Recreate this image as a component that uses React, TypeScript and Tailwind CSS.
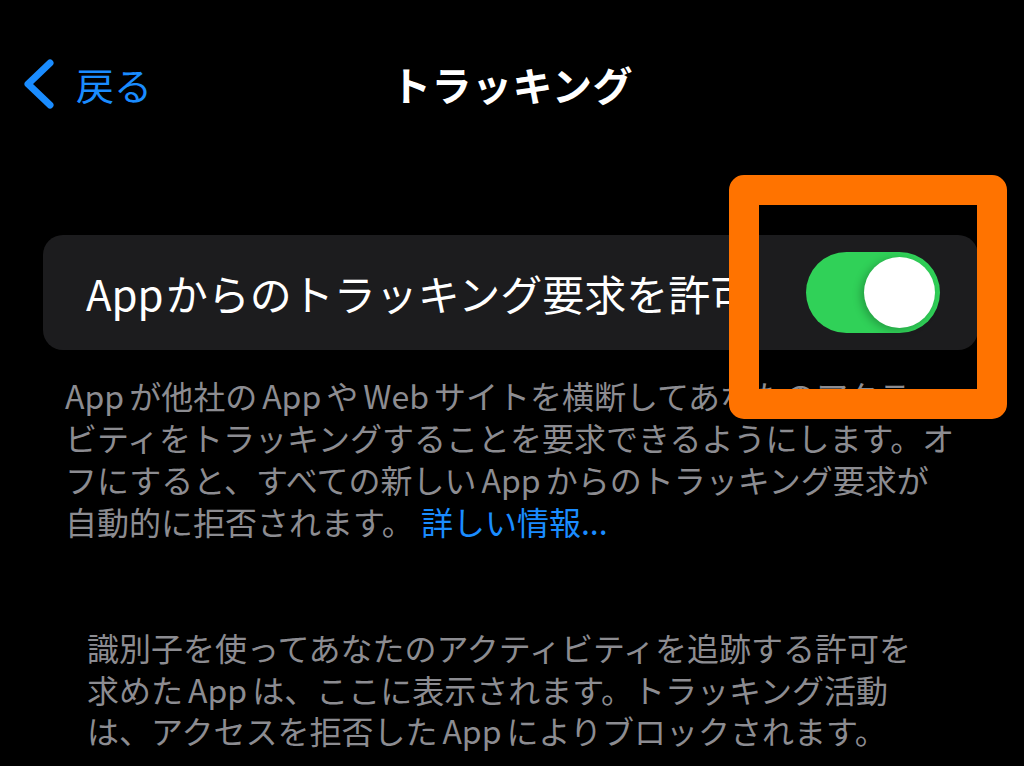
import React from 'react';

const Latin: React.FC<{ children: React.ReactNode; first?: boolean }> = ({ children, first }) => (
  <span className={first ? 'mr-[5px]' : 'mx-[5px]'}>{children}</span>
);

const Toggle: React.FC<{ on: boolean }> = ({ on }) => (
  <div
    className={`flex h-[81px] w-[134px] shrink-0 items-center rounded-full p-[5px] ${
      on ? 'justify-end bg-[#30d158]' : 'justify-start bg-[#39393d]'
    }`}
  >
    <div className="h-[71px] w-[71px] rounded-full bg-white shadow-[-3px_2px_8px_rgba(0,0,0,0.25)]" />
  </div>
);

export default function App() {
  return (
    <div className="relative h-[766px] w-[1024px] overflow-hidden bg-black font-['Noto_Sans_CJK_JP',sans-serif]">
      {/* Nav bar */}
      <div className="mt-[44px] grid h-[80px] grid-cols-[1fr_auto_1fr] items-center pl-[24px] pr-[24px]">
        <div className="flex items-center gap-[22px] text-[#1a8cff]">
          <svg width="30" height="50" viewBox="0 0 30 50" fill="none">
            <polyline
              points="26,4 4,25 26,46"
              stroke="#1a8cff"
              strokeWidth="7"
              strokeLinecap="round"
              strokeLinejoin="round"
            />
          </svg>
          <span className="text-[38px] leading-none">戻る</span>
        </div>
        <div className="text-[40px] font-bold leading-none tracking-[0.5px] text-white">トラッキング</div>
        <div />
      </div>

      {/* Toggle row */}
      <div className="ml-[43px] mt-[111px] flex h-[115px] w-[935px] items-center justify-between rounded-[20px] bg-[#1c1c1e] pl-[43px] pr-[38px]">
        <span className="whitespace-nowrap text-[42px] leading-none text-white">
          <span className="mr-[2px]">App</span>からのトラッキング要求を許可
        </span>
        <Toggle on />
      </div>

      {/* Footer description */}
      <div className="mt-[24px] pl-[65px] text-[32px] leading-[42px] text-[#8c8c91]">
        <div className="whitespace-nowrap">
          <Latin first>App</Latin>が他社の<Latin>App</Latin>や<Latin>Web</Latin>サイトを横断してあなたのアクティ
        </div>
        <div className="whitespace-nowrap">ビティをトラッキングすることを要求できるようにします。オ</div>
        <div className="whitespace-nowrap">
          フにすると、すべての新しい<Latin>App</Latin>からのトラッキング要求が
        </div>
        <div className="whitespace-nowrap">
          自動的に拒否されます。 <span className="text-[#1a8cff]">詳しい情報...</span>
        </div>
      </div>

      {/* Empty list note */}
      <div className="mt-[85px] pl-[87px] text-[32px] leading-[41.5px] text-[#8c8c91]">
        <div className="whitespace-nowrap">識別子を使ってあなたのアクティビティを追跡する許可を</div>
        <div className="whitespace-nowrap">
          求めた<Latin>App</Latin>は、ここに表示されます。トラッキング活動
        </div>
        <div className="whitespace-nowrap">
          は、アクセスを拒否した<Latin>App</Latin>によりブロックされます。
        </div>
      </div>

      {/* Highlight annotation */}
      <div className="absolute left-[729px] top-[175px] h-[244px] w-[278px] rounded-[15px] border-[30px] border-[#ff7300]" />
    </div>
  );
}
